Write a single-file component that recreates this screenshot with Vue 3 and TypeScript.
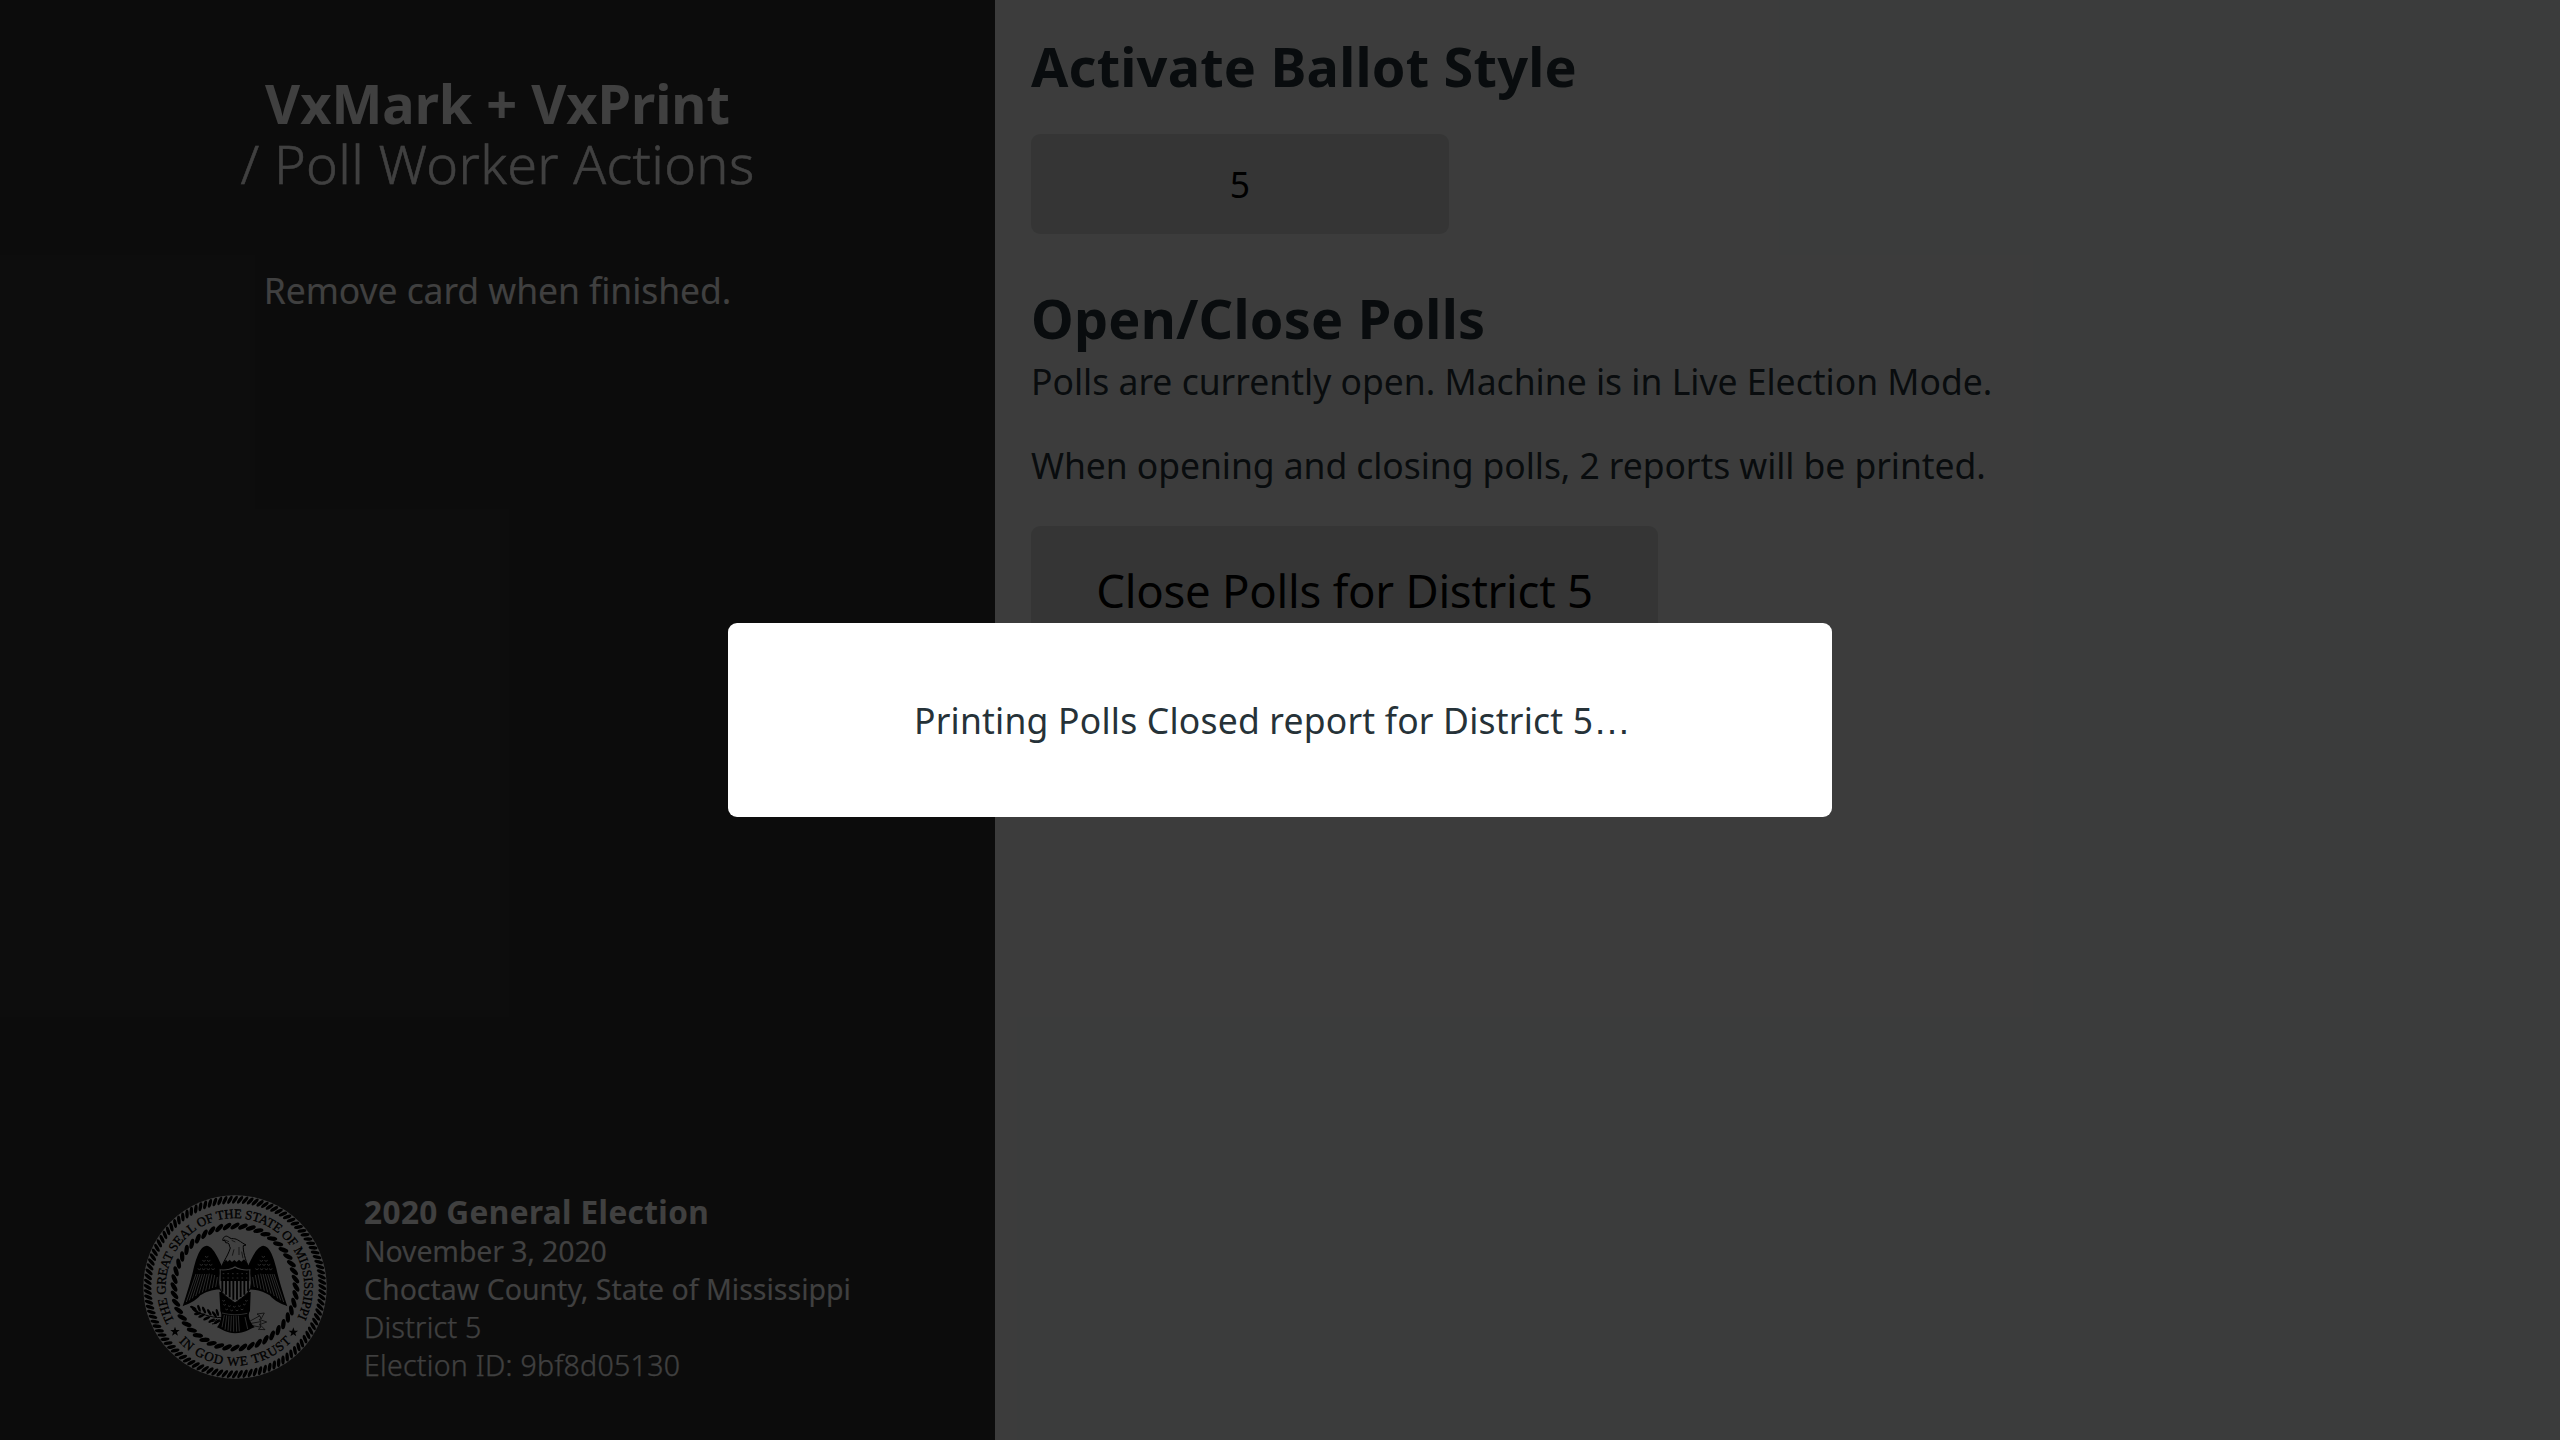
<script setup lang="ts">
interface Strand {
  angle: number
}

const ring = (count: number): Strand[] =>
  Array.from({ length: count }, (_, i) => ({ angle: (i * 360) / count }))

const outerRope = ring(108)
const innerRope = ring(48)

const wingFeathers = [
  'M262 290 L257 320', 'M254 284 L247 323', 'M246 282 L237 327', 'M238 280 L227 331', 'M231 281 L217 336',
  'M224 281 L207 340', 'M217 281 L197 347', 'M210 281 L187 354', 'M204 281 L178 360', 'M198 281 L169 365',
]
const wingScales = [
  [222, 240], [236, 240], [214, 252], [228, 252], [242, 252], [208, 265], [221, 265], [235, 265], [249, 265], [230, 228],
]
const bodySpots = [
  [284, 372], [298, 376], [313, 378], [328, 376], [343, 371], [290, 386], [305, 389], [321, 389], [336, 386], [281, 360], [349, 360],
]
const tailLines = [
  'M283 404 L276 441', 'M290 405 L285 448', 'M297 406 L294 451', 'M304 406 L302 453',
  'M311 406 L311 454', 'M318 406 L320 454', 'M325 406 L328 453', 'M345 410 L353 446',
]
const leaves = [
  [196, 391, 35], [207, 384, 70], [215, 406, -25], [222, 389, 65], [230, 414, -25],
  [238, 396, 60], [245, 421, -30], [253, 402, 55], [203, 400, -10], [261, 424, -35], [190, 383, 30], [262, 397, 75],
]

const electionDate = 'November 3, 2020'
const districtName = 'District 5'
</script>

<template>
  <div class="screen">
    <aside class="sidebar">
      <header class="intro">
        <h1 class="title">VxMark + VxPrint</h1>
        <div class="subtitle">/ Poll Worker Actions</div>
        <p class="hint">Remove card when finished.</p>
      </header>

      <footer class="election">
        <svg class="seal" viewBox="39 44 552 552" aria-hidden="true">
          <defs>
            <path id="seal-top" d="M132.9 422 A208 208 0 1 1 499.5 417" />
            <path id="seal-bottom" d="M146 484 A235 235 0 0 0 486 482" />
            <g id="wing">
              <path
                d="M282 268 C266 240 253 199 230 196 C209 198 199 233 191 264 C184 298 169 344 158 378 C174 371 195 364 211 345 C228 335 250 326 276 328 Z"
                fill="#000"
              />
              <path v-for="d in wingFeathers" :key="d" :d="d" class="cut" />
              <path
                v-for="([x, y], i) in wingScales"
                :key="i"
                :d="`M${x - 5} ${y} q5 6 10 0`"
                class="cut"
              />
            </g>
          </defs>

          <circle cx="315" cy="320" r="275" fill="#fff" />
          <g fill="#000">
            <ellipse
              v-for="s in outerRope"
              :key="s.angle"
              cx="315"
              cy="58"
              rx="13.5"
              ry="5.2"
              :transform="`rotate(${s.angle} 315 320) rotate(-57 315 58)`"
            />
            <ellipse
              v-for="s in innerRope"
              :key="s.angle"
              cx="315"
              cy="137"
              rx="15.5"
              ry="6.6"
              :transform="`rotate(${s.angle} 315 320) rotate(-32 315 137)`"
            />
          </g>

          <text class="legend">
            <textPath href="#seal-top" textLength="852">THE GREAT SEAL OF THE STATE OF MISSISSIPPI</textPath>
          </text>
          <text class="legend">
            <textPath href="#seal-bottom" textLength="378">IN GOD WE TRUST</textPath>
          </text>
          <path
            d="M135 439 l3.6 10 10.6 .3 -8.4 6.5 3 10.2 -8.8 -6 -8.8 6 3 -10.2 -8.4 -6.5 10.6 -.3z M490 441 l3.6 10 10.6 .3 -8.4 6.5 3 10.2 -8.8 -6 -8.8 6 3 -10.2 -8.4 -6.5 10.6 -.3z"
            fill="#000"
          />

          <use href="#wing" />
          <use href="#wing" transform="translate(630 0) scale(-1 1)" />

          <path
            d="M276 262 C276 246 290 236 301 203 C296 196 300 190 293 188 L287 187 L285 181 L278 180 C279 171 285 166 292 168 C298 171 301 176 310 175 C322 175 331 185 348 194 L340 196 C338 210 346 238 356 262 Z"
            fill="#fff"
            stroke="#000"
            stroke-width="3"
          />
          <path d="M282 178 L297 184 M305 180 L316 185 M312 207 L307 226 M327 200 L327 224 M335 214 L339 234" fill="none" stroke="#000" stroke-width="2" />
          <path d="M274 266 C276 250 283 243 288 238 L293 244 L299 238 L306 245 L313 239 L320 245 L327 238 L334 244 L342 237 C352 246 356 254 357 266 Z" fill="#000" />

          <path d="M268 335 L362 335 L360 392 C352 402 358 425 374 441 C356 447 346 458 315 459 C290 459 276 446 261 441 C274 425 277 402 271 392 Z" fill="#000" />
          <path v-for="([x, y], i) in bodySpots" :key="i" :d="`M${x - 4} ${y} q4 5 8 0`" class="cut" />
          <path v-for="d in tailLines" :key="d" :d="d" class="cut" />
          <path d="M276 398 Q315 408 352 399" class="cut" />

          <path
            d="M267 265 C280 268 302 265 315 256 C328 265 350 268 363 265 C360 280 367 305 362 322 C353 345 332 354 315 368 C298 354 277 345 268 322 C263 305 270 280 267 265 Z"
            fill="#fff"
            stroke="#000"
            stroke-width="3"
          />
          <path
            d="M272 270 C288 271 304 268 315 262 C326 268 342 271 358 270 L358 302 L272 302 Z"
            fill="#000"
          />
          <g class="cut">
            <path d="M278 280 H352" stroke-dasharray="5 9" />
            <path d="M278 293 H352" stroke-dasharray="5 9" />
          </g>
          <path
            d="M277 302 V334 M288 302 V343 M299 302 V351 M310 302 V358 M321 302 V358 M332 302 V350 M343 302 V343 M354 302 V333"
            fill="none"
            stroke="#000"
            stroke-width="5.5"
          />

          <path d="M186 385 C210 400 240 412 275 412" fill="none" stroke="#000" stroke-width="3" />
          <ellipse
            v-for="([x, y, a], i) in leaves"
            :key="i"
            :cx="x"
            :cy="y"
            rx="11"
            ry="4"
            fill="#000"
            :transform="`rotate(${a} ${x} ${y})`"
          />
          <path d="M238 424 q14 2 24 -8 M246 431 q14 0 26 -10" fill="none" stroke="#000" stroke-width="3" />
          <g fill="#fff" stroke="#000" stroke-width="2">
            <path d="M355 425 L390 406 M358 430 L392 424 M358 434 L394 441" fill="none" />
            <path d="M381 401 L403 398 L393 416 L390 407 Z M388 417 L410 425 L389 433 L393 425 Z M390 433 L405 448 L385 447 L392 441 Z" />
          </g>
        </svg>

        <div class="details">
          <div class="name">2020 General Election</div>
          <div class="date">{{ electionDate }}</div>
          <div class="place">Choctaw County, State of Mississippi</div>
          <div class="light">{{ districtName }}</div>
          <div class="light">Election ID: 9bf8d05130</div>
        </div>
      </footer>
    </aside>

    <main class="main">
      <h1 class="heading">Activate Ballot Style</h1>
      <button class="button ballot" type="button">5</button>
      <h1 class="heading polls">Open/Close Polls</h1>
      <p class="para status">Polls are currently open. Machine is in Live Election Mode.</p>
      <p class="para reports">When opening and closing polls, 2 reports will be printed.</p>
      <button class="button close" type="button">Close Polls for {{ districtName }}</button>
    </main>

    <div class="overlay">
      <div class="modal" role="dialog">
        <p class="message">Printing Polls Closed report for {{ districtName }}<span class="dots">…</span></p>
      </div>
    </div>
  </div>
</template>

<style>
body {
  margin: 0;
  overflow: hidden;
}
</style>

<style scoped>
.screen {
  position: relative;
  display: flex;
  width: 2560px;
  height: 1440px;
  overflow: hidden;
  font-family: "Noto Sans", "Open Sans", sans-serif;
  font-size: 35.5px;
  line-height: 47px;
  color: #263238;
  background: #edf0ee;
}

h1,
p {
  margin: 0;
}

.sidebar {
  box-sizing: border-box;
  display: flex;
  flex-direction: column;
  justify-content: space-between;
  width: 995px;
  padding: 73px 0 56px;
  background: #333;
  color: #fff;
}

.intro {
  text-align: center;
}

.title,
.subtitle,
.heading {
  font-size: 54px;
  line-height: 60px;
}

.title {
  font-weight: 700;
}

.subtitle {
  font-weight: 300;
  letter-spacing: 0.34px;
  -webkit-text-stroke: 0.5px currentColor;
}

.hint {
  margin-top: 74px;
  letter-spacing: -0.06px;
}

.election {
  display: flex;
  align-items: flex-start;
  gap: 37px;
  padding-left: 143px;
}

.seal {
  flex: none;
  width: 184px;
  height: 184px;
  margin-top: 2px;
}

.legend {
  font-family: "Liberation Serif", serif;
  font-size: 39px;
  fill: #000;
  stroke: #000;
  stroke-width: 1px;
}

.cut {
  fill: none;
  stroke: #fff;
  stroke-width: 2px;
}

.details {
  font-size: 28.5px;
  line-height: 38px;
  white-space: nowrap;
}

.name {
  margin-bottom: 1px;
  font-size: 31.5px;
  font-weight: 700;
  letter-spacing: 0.42px;
}

.date {
  letter-spacing: -0.13px;
}

.light {
  font-weight: 300;
  letter-spacing: 0.29px;
  -webkit-text-stroke: 0.25px currentColor;
}

.main {
  display: flex;
  flex-direction: column;
  align-items: flex-start;
  flex: 1;
  padding: 36px 36px 0;
}

.heading {
  font-weight: 700;
  letter-spacing: 0.2px;
}

.polls {
  margin-top: 54px;
}

.status {
  margin-top: 10px;
}

.reports {
  margin-top: 37px;
  letter-spacing: -0.07px;
}

.button {
  border: none;
  border-radius: 9px;
  padding: 0;
  background: #d3d3d3;
  color: #000;
  font-family: inherit;
}

.ballot {
  width: 418px;
  height: 100px;
  margin-top: 38px;
  font-size: 35.5px;
}

.close {
  width: 627px;
  height: 131px;
  margin-top: 37px;
  padding-bottom: 3px;
  font-size: 45.5px;
  letter-spacing: -0.26px;
}

.overlay {
  position: absolute;
  inset: 0;
  display: flex;
  align-items: center;
  justify-content: center;
  background: rgba(0, 0, 0, 0.75);
}

.modal {
  display: flex;
  align-items: center;
  justify-content: center;
  width: 1104px;
  height: 194px;
  border-radius: 9px;
  background: #fff;
}

.message {
  margin-right: 15px;
  letter-spacing: 0.2px;
}

.dots {
  font-family: "Liberation Sans", sans-serif;
  font-size: 37.5px;
  line-height: 1;
}
</style>
